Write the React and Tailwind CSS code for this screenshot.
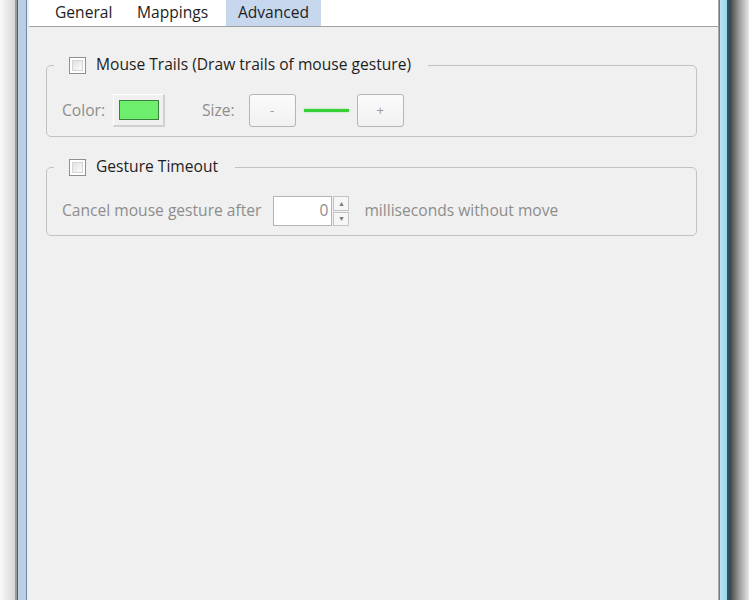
import React from 'react';

const font = { fontFamily: '"Open Sans", "Noto Sans", Arial, sans-serif' };

const CheckBox = () => (
    <div className="w-[17px] h-[17px] border border-[#8f8f8f] bg-white p-[2px]">
        <div className="w-full h-full border border-[#d4d4d4] bg-gradient-to-br from-[#e2e2e2] to-[#fbfbfb]" />
    </div>
);

const SmallButton = ({ label }) => (
    <div className="w-[47px] h-[33px] rounded-[3px] border border-[#b5b5b5] bg-gradient-to-b from-[#fbfbfb] to-[#f1f1f1] flex items-center justify-center text-[13px] text-[#9a9a9a]">
        {label}
    </div>
);

const Group = ({ title, children }) => (
    <fieldset className="border border-[#c2c2c2] rounded-[5px] pl-[7px] pr-[15px]">
        <legend className="pl-[15px] pr-[17px] h-[18px]">
            <div className="flex items-center gap-[10px] h-[18px]">
                <CheckBox />
                <span className="text-[15.6px] text-[#1e1e1e] leading-none">{title}</span>
            </div>
        </legend>
        {children}
    </fieldset>
);

export default function App() {
    return (
        <div className="w-[749px] h-[600px] flex overflow-hidden bg-[#f0f0f0]" style={font}>
            {/* left window frame */}
            <div className="flex h-full">
                <div className="w-[15px] h-full bg-gradient-to-r from-[#fafafa] to-[#d6d6d6]" />
                <div className="w-[2px] h-full bg-[#9a9a9a]" />
                <div className="w-[1px] h-full bg-[#4f5a66]" />
                <div className="w-[8px] h-full bg-[#b9cfe6]" />
                <div className="w-[1px] h-full bg-[#7b8794]" />
                <div className="w-[2px] h-full bg-[#e6eef7]" />
            </div>

            {/* content */}
            <div className="flex-1 flex flex-col">
                <div className="h-[27px] bg-white border-b border-[#a0a0a0] flex text-[15.6px] text-[#1e1e1e] leading-none">
                    <div className="w-[108px] pl-[26px] flex items-center">General</div>
                    <div className="w-[89px] flex items-center">Mappings</div>
                    <div className="w-[95px] flex items-center justify-center bg-[#c7d8ee]">Advanced</div>
                </div>

                <div className="pl-[17px] pr-[21px] pt-[29px] flex flex-col gap-[21px]">
                    <Group title="Mouse Trails (Draw trails of mouse gesture)">
                        <div className="flex items-center pl-[8px] pt-[20px] pb-[9px] text-[15.6px] text-[#8d8d8d]">
                            <span>Color:</span>
                            <div className="ml-[8px] w-[52px] h-[33px] border-r-2 border-b-2 border-[#d0d0d0] border-t border-l border-t-white border-l-white flex items-center justify-center">
                                <div className="w-[40px] h-[20px] bg-[#6def6d] border border-[#3c7f3c]" />
                            </div>
                            <span className="ml-[37px]">Size:</span>
                            <div className="ml-[14px]"><SmallButton label="-" /></div>
                            <div className="mx-[8px] w-[45px] h-[3px] bg-[#38d038] shadow-[0_0_2px_#7fe07f]" />
                            <SmallButton label="+" />
                        </div>
                    </Group>

                    <Group title="Gesture Timeout">
                        <div className="flex items-center pl-[8px] pt-[20px] pb-[9px] text-[15.6px] text-[#8d8d8d]">
                            <span>Cancel mouse gesture after</span>
                            <div className="ml-[12px] w-[59px] h-[30px] border border-[#b4b4b4] bg-white flex items-center justify-end pr-[3px] text-[#8d8d8d]">0</div>
                            <div className="ml-[1px] w-[16px] h-[30px] flex flex-col gap-[1px]">
                                <div className="flex-1 border border-[#c4c4c4] bg-[#f6f6f6] flex items-center justify-center text-[7px] text-[#7a7a7a] leading-none">▲</div>
                                <div className="flex-1 border border-[#c4c4c4] bg-[#f6f6f6] flex items-center justify-center text-[7px] text-[#7a7a7a] leading-none">▼</div>
                            </div>
                            <span className="ml-[15px]">milliseconds without move</span>
                        </div>
                    </Group>
                </div>
            </div>

            {/* right window frame */}
            <div className="flex h-full">
                <div className="w-[1px] h-full bg-[#a8a8a8]" />
                <div className="w-[1px] h-full bg-[#6f7d8c]" />
                <div className="w-[7px] h-full bg-gradient-to-r from-[#b8e2f2] to-[#9fd3ea]" />
                <div className="w-[2px] h-full bg-[#24596b]" />
                <div className="w-[20px] h-full bg-gradient-to-r from-[#3c3c3c] via-[#9a9a9a] to-[#e8e8e8]" />
            </div>
        </div>
    );
}
